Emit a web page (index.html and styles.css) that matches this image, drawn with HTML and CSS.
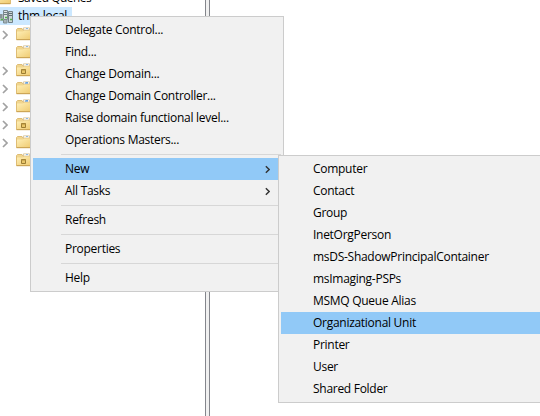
FILE: index.html
```html
<!DOCTYPE html>
<html lang="en">
<head>
<meta charset="utf-8">
<title>Active Directory Users and Computers</title>
<link rel="stylesheet" href="styles.css">
</head>
<body>
<svg class="defs" width="0" height="0" aria-hidden="true">
  <defs>
    <linearGradient id="paper" x1="0" y1="0" x2="1" y2="1"><stop offset="0" stop-color="#fff0b8"/><stop offset="1" stop-color="#efcb72"/></linearGradient>
    <symbol id="folder" viewBox="0 0 16 14">
      <path d="M.5 12.500V2.500L1.500 1.500H6L7 3H15.500V12.500Z" fill="#f0d58e" stroke="#dfbd74"/>
      <path d="M7.500 3V.8H13.500V3Z" fill="#fff" stroke="#d5c093" stroke-width=".8"/>
      <path d="M1 4.500H7L8 3.500H15V12H1Z" fill="url(#paper)"/>
      <path d="M.5 12.700H15.500" stroke="#c9a04f"/>
      <path d="M10 1.500H12" stroke="#8bb9e6"/>
    </symbol>
    <symbol id="unit" viewBox="0 0 16 14">
      <use href="#folder"/>
      <path d="M5.500 6.500H9.500V10.500H5.500Z" fill="#e8c568" stroke="#9c7d33"/>
      <path d="M5 7H10" stroke="#b18e3c"/>
    </symbol>
    <symbol id="arrow" viewBox="0 0 6 10"><path d="M1 1L5 5L1 9" fill="none" stroke="currentColor" stroke-width="1.700"/></symbol>
  </defs>
</svg>
<main class="window">
  <section class="tree">
    <div class="row root"><svg class="folder" width="16" height="14"><use href="#folder"/></svg><span class="queries">Saved Queries</span></div>
    <div class="row root selected">
      <svg class="domain" width="13" height="15" viewBox="0 0 13 15">
        <path d="M0 5H3V12H0Z" fill="#a9b3b5"/><path d="M0 6H2M0 8H2" stroke="#65767b"/>
        <path d="M3.500 1.500H7.500V10.500H3.500Z" fill="#dce3e4" stroke="#7b898d"/><path d="M4 3.500H7M4 5.500H7" stroke="#6f8084"/>
        <path d="M8.500 2.500H12.500V13.500H8.500Z" fill="#cbd4d6" stroke="#718085"/><path d="M9 4.500H12M9 6.500H12" stroke="#5d6f74"/>
        <path d="M1 10.500H3M5 8.500H7M10 10.500H12" stroke="#4fb64b" stroke-width="1.500"/>
        <path d="M3.500 11V14H7V11" fill="#a7b4b7" stroke="#7e8c90"/>
      </svg><span>thm.local</span>
    </div>
    <div class="row"><svg class="chevron"><use href="#arrow"/></svg><svg class="folder" width="16" height="14"><use href="#folder"/></svg></div>
    <div class="row"><i class="chevron"></i><svg class="folder" width="16" height="14"><use href="#folder"/></svg></div>
    <div class="row"><svg class="chevron"><use href="#arrow"/></svg><svg class="folder" width="16" height="14"><use href="#unit"/></svg></div>
    <div class="row"><svg class="chevron"><use href="#arrow"/></svg><svg class="folder" width="16" height="14"><use href="#folder"/><path d="M9 2H12" stroke="#3c89de"/></svg></div>
    <div class="row"><svg class="chevron"><use href="#arrow"/></svg><svg class="folder" width="16" height="14"><use href="#folder"/><path d="M9 2H12" stroke="#3c89de"/></svg></div>
    <div class="row"><svg class="chevron"><use href="#arrow"/></svg><svg class="folder" width="16" height="14"><use href="#unit"/></svg></div>
    <div class="row"><svg class="chevron"><use href="#arrow"/></svg><svg class="folder" width="16" height="14"><use href="#folder"/></svg></div>
    <div class="row"><i class="chevron"></i><svg class="folder" width="16" height="14"><use href="#unit"/></svg></div>
  </section>
  <div class="splitter"></div>

  <nav class="menu context">
    <div class="item">Delegate Control...</div>
    <div class="item">Find...</div>
    <div class="item">Change Domain...</div>
    <div class="item">Change Domain Controller...</div>
    <div class="item">Raise domain functional level...</div>
    <div class="item">Operations Masters...</div>
    <div class="separator"></div>
    <div class="item active">New<svg class="more"><use href="#arrow"/></svg></div>
    <div class="item">All Tasks<svg class="more"><use href="#arrow"/></svg></div>
    <div class="separator"></div>
    <div class="item">Refresh</div>
    <div class="separator"></div>
    <div class="item">Properties</div>
    <div class="separator"></div>
    <div class="item">Help</div>
  </nav>

  <nav class="menu submenu">
    <div class="item">Computer</div>
    <div class="item">Contact</div>
    <div class="item">Group</div>
    <div class="item">InetOrgPerson</div>
    <div class="item">msDS-ShadowPrincipalContainer</div>
    <div class="item">msImaging-PSPs</div>
    <div class="item">MSMQ Queue Alias</div>
    <div class="item active">Organizational Unit</div>
    <div class="item">Printer</div>
    <div class="item">User</div>
    <div class="item">Shared Folder</div>
  </nav>
</main>
</body>
</html>
```
FILE: styles.css
```css
* { box-sizing: border-box; }
body {
  margin: 0;
  background: #fff;
  color: #000;
  font: 12px/18px "Open Sans", "Noto Sans", sans-serif;
  letter-spacing: -0.28px;
}
.defs { position: absolute; }
.window {
  position: relative;
  display: flex;
  width: 540px;
  height: 416px;
  overflow: hidden;
}
.tree { width: 205px; margin-top: -11px; }
.row { display: flex; align-items: center; height: 18px; white-space: nowrap; }
.row .folder { flex: none; }
.root .folder { width: 16px; margin-left: -5px; margin-right: 7px; }
.root .domain { flex: none; margin-right: 5px; }
.queries { letter-spacing: -0.55px; }
.selected { width: 72px; background: #cce8ff; }
.chevron { flex: none; width: 6px; height: 10px; margin: 2px 8px 0 2px; color: #a2a2a2; }
.splitter {
  width: 5px;
  background: #f0f0f0;
  border: solid #84868c;
  border-width: 0 1px;
}
.menu {
  position: absolute;
  padding: 2px;
  background: #f1f1f1;
  border: 1px solid #ccc;
}
.context { left: 30px; top: 16px; width: 254px; }
.submenu { left: 278px; top: 155px; width: 275px; }
.item {
  display: flex;
  align-items: center;
  justify-content: space-between;
  height: 22px;
  padding: 0 11px 0 32px;
  white-space: nowrap;
}
.active { background: #91c9f7; }
.more { width: 5px; height: 9px; color: #333; }
.separator { height: 7px; padding: 3px 0; margin-left: 28px; }
.separator::before { content: ""; display: block; height: 1px; background: #d7d7d7; }
```
